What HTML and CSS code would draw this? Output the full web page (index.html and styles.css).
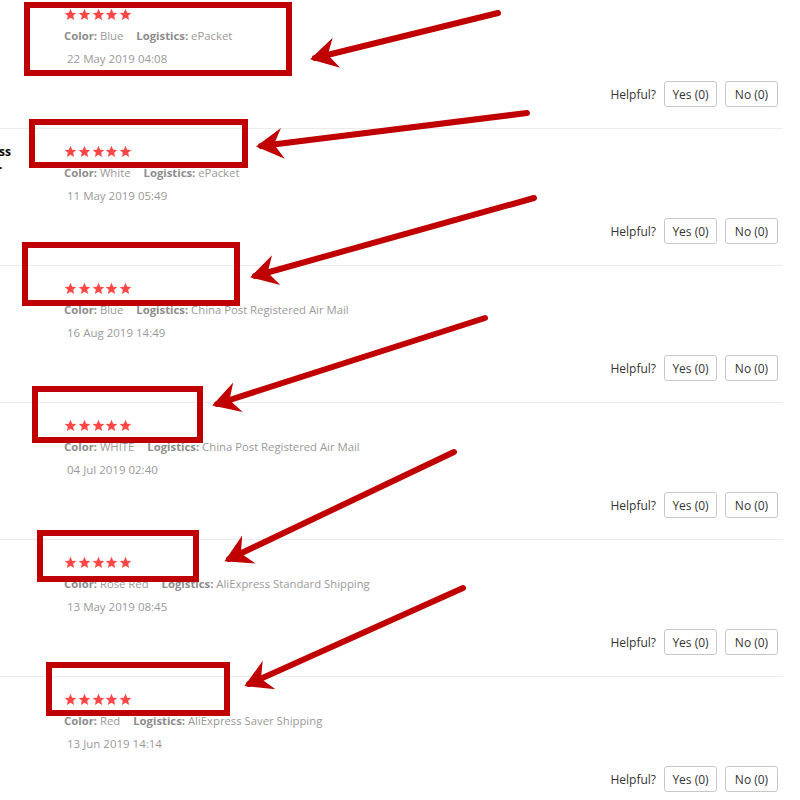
FILE: index.html
```html
<!DOCTYPE html>
<html>
<head>
<meta charset="utf-8">
<link rel="stylesheet" href="styles.css">
</head>
<body>
<div class="page">
  <div class="reviews">
    <div class="review">
      <div class="user"></div>
      <div class="body">
        <div class="stars">
          <svg viewBox="0 0 24 24"><path d="M12 1.5l3.1 7.1 7.6.7-5.8 5.1 1.8 7.6L12 18l-6.7 4 1.8-7.6-5.8-5.1 7.6-.7z"/></svg>
          <svg viewBox="0 0 24 24"><path d="M12 1.5l3.1 7.1 7.6.7-5.8 5.1 1.8 7.6L12 18l-6.7 4 1.8-7.6-5.8-5.1 7.6-.7z"/></svg>
          <svg viewBox="0 0 24 24"><path d="M12 1.5l3.1 7.1 7.6.7-5.8 5.1 1.8 7.6L12 18l-6.7 4 1.8-7.6-5.8-5.1 7.6-.7z"/></svg>
          <svg viewBox="0 0 24 24"><path d="M12 1.5l3.1 7.1 7.6.7-5.8 5.1 1.8 7.6L12 18l-6.7 4 1.8-7.6-5.8-5.1 7.6-.7z"/></svg>
          <svg viewBox="0 0 24 24"><path d="M12 1.5l3.1 7.1 7.6.7-5.8 5.1 1.8 7.6L12 18l-6.7 4 1.8-7.6-5.8-5.1 7.6-.7z"/></svg>
        </div>
        <div class="meta"><span class="attr"><b>Color:</b> Blue</span><span class="attr"><b>Logistics:</b> ePacket</span></div>
        <div class="date">22 May 2019 04:08</div>
        <div class="helpful"><span class="hl">Helpful?</span><button class="btn">Yes (0)</button><button class="btn">No (0)</button></div>
      </div>
    </div>

    <div class="review">
      <div class="user"><div class="uname">ss<br>.</div></div>
      <div class="body">
        <div class="stars">
          <svg viewBox="0 0 24 24"><path d="M12 1.5l3.1 7.1 7.6.7-5.8 5.1 1.8 7.6L12 18l-6.7 4 1.8-7.6-5.8-5.1 7.6-.7z"/></svg>
          <svg viewBox="0 0 24 24"><path d="M12 1.5l3.1 7.1 7.6.7-5.8 5.1 1.8 7.6L12 18l-6.7 4 1.8-7.6-5.8-5.1 7.6-.7z"/></svg>
          <svg viewBox="0 0 24 24"><path d="M12 1.5l3.1 7.1 7.6.7-5.8 5.1 1.8 7.6L12 18l-6.7 4 1.8-7.6-5.8-5.1 7.6-.7z"/></svg>
          <svg viewBox="0 0 24 24"><path d="M12 1.5l3.1 7.1 7.6.7-5.8 5.1 1.8 7.6L12 18l-6.7 4 1.8-7.6-5.8-5.1 7.6-.7z"/></svg>
          <svg viewBox="0 0 24 24"><path d="M12 1.5l3.1 7.1 7.6.7-5.8 5.1 1.8 7.6L12 18l-6.7 4 1.8-7.6-5.8-5.1 7.6-.7z"/></svg>
        </div>
        <div class="meta"><span class="attr"><b>Color:</b> White</span><span class="attr"><b>Logistics:</b> ePacket</span></div>
        <div class="date">11 May 2019 05:49</div>
        <div class="helpful"><span class="hl">Helpful?</span><button class="btn">Yes (0)</button><button class="btn">No (0)</button></div>
      </div>
    </div>

    <div class="review">
      <div class="user"></div>
      <div class="body">
        <div class="stars">
          <svg viewBox="0 0 24 24"><path d="M12 1.5l3.1 7.1 7.6.7-5.8 5.1 1.8 7.6L12 18l-6.7 4 1.8-7.6-5.8-5.1 7.6-.7z"/></svg>
          <svg viewBox="0 0 24 24"><path d="M12 1.5l3.1 7.1 7.6.7-5.8 5.1 1.8 7.6L12 18l-6.7 4 1.8-7.6-5.8-5.1 7.6-.7z"/></svg>
          <svg viewBox="0 0 24 24"><path d="M12 1.5l3.1 7.1 7.6.7-5.8 5.1 1.8 7.6L12 18l-6.7 4 1.8-7.6-5.8-5.1 7.6-.7z"/></svg>
          <svg viewBox="0 0 24 24"><path d="M12 1.5l3.1 7.1 7.6.7-5.8 5.1 1.8 7.6L12 18l-6.7 4 1.8-7.6-5.8-5.1 7.6-.7z"/></svg>
          <svg viewBox="0 0 24 24"><path d="M12 1.5l3.1 7.1 7.6.7-5.8 5.1 1.8 7.6L12 18l-6.7 4 1.8-7.6-5.8-5.1 7.6-.7z"/></svg>
        </div>
        <div class="meta"><span class="attr"><b>Color:</b> Blue</span><span class="attr"><b>Logistics:</b> China Post Registered Air Mail</span></div>
        <div class="date">16 Aug 2019 14:49</div>
        <div class="helpful"><span class="hl">Helpful?</span><button class="btn">Yes (0)</button><button class="btn">No (0)</button></div>
      </div>
    </div>

    <div class="review">
      <div class="user"></div>
      <div class="body">
        <div class="stars">
          <svg viewBox="0 0 24 24"><path d="M12 1.5l3.1 7.1 7.6.7-5.8 5.1 1.8 7.6L12 18l-6.7 4 1.8-7.6-5.8-5.1 7.6-.7z"/></svg>
          <svg viewBox="0 0 24 24"><path d="M12 1.5l3.1 7.1 7.6.7-5.8 5.1 1.8 7.6L12 18l-6.7 4 1.8-7.6-5.8-5.1 7.6-.7z"/></svg>
          <svg viewBox="0 0 24 24"><path d="M12 1.5l3.1 7.1 7.6.7-5.8 5.1 1.8 7.6L12 18l-6.7 4 1.8-7.6-5.8-5.1 7.6-.7z"/></svg>
          <svg viewBox="0 0 24 24"><path d="M12 1.5l3.1 7.1 7.6.7-5.8 5.1 1.8 7.6L12 18l-6.7 4 1.8-7.6-5.8-5.1 7.6-.7z"/></svg>
          <svg viewBox="0 0 24 24"><path d="M12 1.5l3.1 7.1 7.6.7-5.8 5.1 1.8 7.6L12 18l-6.7 4 1.8-7.6-5.8-5.1 7.6-.7z"/></svg>
        </div>
        <div class="meta"><span class="attr"><b>Color:</b> WHITE</span><span class="attr"><b>Logistics:</b> China Post Registered Air Mail</span></div>
        <div class="date">04 Jul 2019 02:40</div>
        <div class="helpful"><span class="hl">Helpful?</span><button class="btn">Yes (0)</button><button class="btn">No (0)</button></div>
      </div>
    </div>

    <div class="review">
      <div class="user"></div>
      <div class="body">
        <div class="stars">
          <svg viewBox="0 0 24 24"><path d="M12 1.5l3.1 7.1 7.6.7-5.8 5.1 1.8 7.6L12 18l-6.7 4 1.8-7.6-5.8-5.1 7.6-.7z"/></svg>
          <svg viewBox="0 0 24 24"><path d="M12 1.5l3.1 7.1 7.6.7-5.8 5.1 1.8 7.6L12 18l-6.7 4 1.8-7.6-5.8-5.1 7.6-.7z"/></svg>
          <svg viewBox="0 0 24 24"><path d="M12 1.5l3.1 7.1 7.6.7-5.8 5.1 1.8 7.6L12 18l-6.7 4 1.8-7.6-5.8-5.1 7.6-.7z"/></svg>
          <svg viewBox="0 0 24 24"><path d="M12 1.5l3.1 7.1 7.6.7-5.8 5.1 1.8 7.6L12 18l-6.7 4 1.8-7.6-5.8-5.1 7.6-.7z"/></svg>
          <svg viewBox="0 0 24 24"><path d="M12 1.5l3.1 7.1 7.6.7-5.8 5.1 1.8 7.6L12 18l-6.7 4 1.8-7.6-5.8-5.1 7.6-.7z"/></svg>
        </div>
        <div class="meta"><span class="attr"><b>Color:</b> Rose Red</span><span class="attr"><b>Logistics:</b> AliExpress Standard Shipping</span></div>
        <div class="date">13 May 2019 08:45</div>
        <div class="helpful"><span class="hl">Helpful?</span><button class="btn">Yes (0)</button><button class="btn">No (0)</button></div>
      </div>
    </div>

    <div class="review">
      <div class="user"></div>
      <div class="body">
        <div class="stars">
          <svg viewBox="0 0 24 24"><path d="M12 1.5l3.1 7.1 7.6.7-5.8 5.1 1.8 7.6L12 18l-6.7 4 1.8-7.6-5.8-5.1 7.6-.7z"/></svg>
          <svg viewBox="0 0 24 24"><path d="M12 1.5l3.1 7.1 7.6.7-5.8 5.1 1.8 7.6L12 18l-6.7 4 1.8-7.6-5.8-5.1 7.6-.7z"/></svg>
          <svg viewBox="0 0 24 24"><path d="M12 1.5l3.1 7.1 7.6.7-5.8 5.1 1.8 7.6L12 18l-6.7 4 1.8-7.6-5.8-5.1 7.6-.7z"/></svg>
          <svg viewBox="0 0 24 24"><path d="M12 1.5l3.1 7.1 7.6.7-5.8 5.1 1.8 7.6L12 18l-6.7 4 1.8-7.6-5.8-5.1 7.6-.7z"/></svg>
          <svg viewBox="0 0 24 24"><path d="M12 1.5l3.1 7.1 7.6.7-5.8 5.1 1.8 7.6L12 18l-6.7 4 1.8-7.6-5.8-5.1 7.6-.7z"/></svg>
        </div>
        <div class="meta"><span class="attr"><b>Color:</b> Red</span><span class="attr"><b>Logistics:</b> AliExpress Saver Shipping</span></div>
        <div class="date">13 Jun 2019 14:14</div>
        <div class="helpful"><span class="hl">Helpful?</span><button class="btn">Yes (0)</button><button class="btn">No (0)</button></div>
      </div>
    </div>
  </div>

  <svg class="annot" width="800" height="800" viewBox="0 0 800 800">
    <defs>
      <marker id="head" markerUnits="userSpaceOnUse" markerWidth="34" markerHeight="36" viewBox="-30 -18 34 36" refX="-5" refY="0" orient="auto">
        <path d="M0 0 L-27 -15.5 L-19 -1.5 L-19 1.5 L-27 15.5 Z" fill="#c00000"/>
      </marker>
    </defs>
    <g fill="none" stroke="#c00000" stroke-width="6">
      <rect x="27" y="5" width="262" height="68"/>
      <rect x="32" y="122" width="213" height="43"/>
      <rect x="25" y="245" width="212" height="58"/>
      <rect x="35" y="389" width="165" height="51"/>
      <rect x="40" y="533" width="156" height="46"/>
      <rect x="49" y="665" width="178" height="48"/>
    </g>
    <g fill="none" stroke="#c00000" stroke-width="6" stroke-linecap="round" marker-end="url(#head)">
      <line x1="498" y1="13" x2="315" y2="58"/>
      <line x1="527" y1="113" x2="261" y2="146"/>
      <line x1="534" y1="198" x2="255" y2="276"/>
      <line x1="485" y1="318" x2="217" y2="404"/>
      <line x1="454" y1="452" x2="229" y2="559"/>
      <line x1="463" y1="588" x2="249" y2="684"/>
    </g>
  </svg>
</div>
</body>
</html>
```

FILE: styles.css
```css
html, body {
  margin: 0;
  padding: 0;
  background: #fff;
}

body {
  font-family: "Open Sans", "Liberation Sans", sans-serif;
  font-size: 12px;
  color: #333;
  overflow: hidden;
  height: 800px;
}

.page {
  position: relative;
  width: 800px;
  height: 800px;
  overflow: hidden;
}

.reviews {
  width: 783px;
  margin-top: -9px;
}

.review {
  display: grid;
  grid-template-columns: 64px 1fr;
  border-top: 1px solid #ececec;
  padding: 15px 5px 21px 0;
}

.user {
  padding-top: 1px;
  font-size: 12px;
  color: #000;
}

.uname {
  font-weight: 700;
  line-height: 13px;
  margin-left: -1px;
}

.stars {
  display: flex;
  gap: 0.75px;
  height: 14px;
  align-items: center;
}

.stars svg {
  width: 13px;
  height: 13px;
  fill: #ff4747;
  display: block;
}

.meta {
  margin-top: 6px;
  line-height: 18px;
  font-size: 11.3px;
  color: #999;
  white-space: nowrap;
}

.meta b {
  font-weight: 700;
  color: #8c8c8c;
}

.attr {
  margin-right: 13px;
}

.date {
  margin-top: 5px;
  line-height: 18px;
  font-size: 11.5px;
  color: #999;
  padding-left: 3px;
}

.helpful {
  margin-top: 13px;
  display: flex;
  justify-content: flex-end;
  align-items: center;
  gap: 8px;
  height: 26px;
}

.hl {
  color: #333;
}

.btn {
  font-family: "Open Sans", "Liberation Sans", sans-serif;
  font-size: 12px;
  color: #333;
  background: #fff;
  border: 1px solid #c8c8c8;
  border-radius: 3px;
  height: 26px;
  padding: 0 6px;
  min-width: 53px;
  cursor: pointer;
}

.annot {
  position: absolute;
  left: 0;
  top: 0;
  pointer-events: none;
}
```
